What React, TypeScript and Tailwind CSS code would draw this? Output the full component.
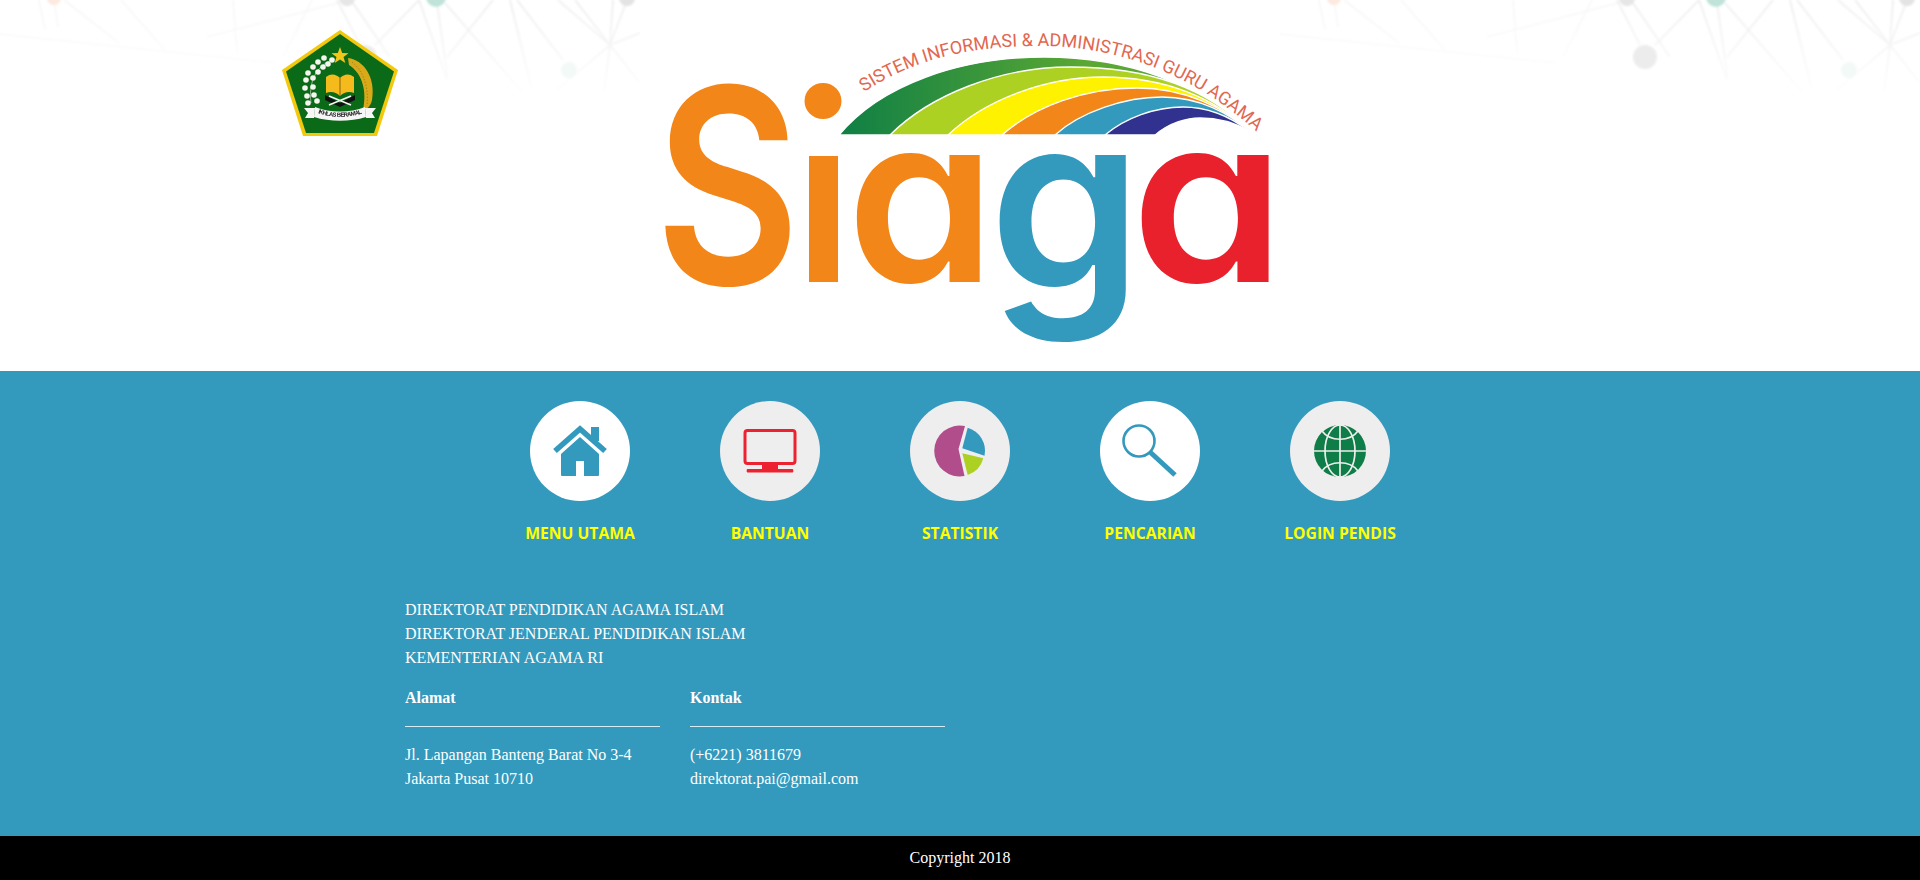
import React from "react";

const patternLines = [
  [419, 0, 375, 45], [337, 0, 360, 45], [419, 0, 447, 80], [437, 3, 448, 80], [445, 3, 523, 93],
  [510, 0, 532, 90], [517, 0, 563, 60], [558, 0, 610, 45], [575, 0, 610, 45], [613, 0, 610, 45],
  [627, 0, 610, 45], [610, 45, 640, 33], [610, 45, 640, 83], [610, 45, 553, 93], [610, 45, 603, 100],
  [493, 0, 447, 57], [353, 3, 390, 57],
];

const faintLines = [
  [54, 0, 58, 27], [39, 0, 45, 30], [64, 0, 119, 43], [121, 0, 165, 50], [233, 0, 237, 53],
  [312, 0, 283, 57], [338, 3, 207, 37], [-20, 32, 275, 63],
];

function NetworkPattern() {
  return (
    <svg viewBox="0 0 640 110" className="absolute left-0 top-0 h-[110px] w-[640px]">
      <defs>
        <linearGradient id="fadeLine" gradientUnits="userSpaceOnUse" x1="0" y1="0" x2="0" y2="100">
          <stop offset="0" stopColor="#ebebeb" />
          <stop offset="1" stopColor="#ffffff" />
        </linearGradient>
        <filter id="soften">
          <feGaussianBlur stdDeviation="0.8" />
        </filter>
      </defs>
      <g filter="url(#soften)">
        {patternLines.map((l, i) => (
          <line key={i} x1={l[0]} y1={l[1]} x2={l[2]} y2={l[3]} stroke="url(#fadeLine)" strokeWidth="1.6" />
        ))}
        <g opacity="0.45">
          {faintLines.map((l, i) => (
            <line key={i} x1={l[0]} y1={l[1]} x2={l[2]} y2={l[3]} stroke="url(#fadeLine)" strokeWidth="1.6" />
          ))}
        </g>
        <circle cx="365" cy="57" r="12" fill="#ececec" />
        <circle cx="436" cy="-3" r="10" fill="#bfe3d8" />
        <circle cx="347" cy="-2" r="8" fill="#e6e6e6" />
        <circle cx="627" cy="-2" r="8" fill="#e3e3e3" />
        <circle cx="569" cy="70" r="8" fill="#f3f9f7" />
        <circle cx="54" cy="-2" r="7" fill="#fde9e0" />
      </g>
    </svg>
  );
}

const jasmine = [
  [50, 30], [42, 28], [36, 32], [31, 37], [26, 43], [24, 50], [23, 58], [25, 66], [26, 73],
  [46, 34], [41, 37], [36, 42], [31, 48], [31, 57], [32, 65], [35, 71],
];

function Emblem() {
  return (
    <svg viewBox="0 0 116 106" className="h-[106px] w-[116px]">
      <defs>
        <path id="ribbonText" d="M36 83 C48 88 68 88 81 83" />
      </defs>
      <polygon points="58,0 116,40 95,106 21,106 0,40" fill="#f2c90c" />
      <polygon points="58,4 112,41.5 92,103 24,103 4,41.5" fill="#0b6a18" />
      <polygon
        points="58,17 60.2,23 66.5,23.3 61.5,27 63.3,33 58,29.6 52.7,33 54.5,27 49.5,23.3 55.8,23"
        fill="#f4c61a"
      />
      <path d="M48 31 C36 36 26 50 29 73" stroke="#8fb08a" strokeWidth="1" fill="none" />
      {jasmine.map((p, i) => (
        <circle key={i} cx={p[0]} cy={p[1]} r="2.8" fill="#f5f5ef" />
      ))}
      <path d="M66 28 C82 30 94 48 90 70 C89 75 86 79 81 80 C85 62 81 44 67 35 Z" fill="#d9a91a" />
      <path d="M70 32 C80 40 87 54 85 76" stroke="#8c7a12" strokeWidth="0.7" strokeDasharray="1.5 1.5" fill="none" />
      <path d="M43 65 L58 73 L73 65 L73 70 L58 77 L43 70 Z" fill="#111111" />
      <path d="M47 75 L69 66 M69 75 L47 66" stroke="#f5f5f5" strokeWidth="1.6" />
      <path d="M44 47 C49 43 54 44 58 48 C62 44 67 43 72 47 L72 63 C67 61 62 62 58 66 C54 62 49 61 44 63 Z" fill="#f5bb1d" />
      <path d="M58 48 V66" stroke="#8a6410" strokeWidth="1" />
      <path d="M33 77 C48 83 68 83 83 77 L84 87 C68 92 48 92 32 87 Z" fill="#f6f6f6" />
      <path d="M33 78 L22 78 L26 83 L23 88 L32 88 Z M83 78 L94 78 L90 83 L93 88 L84 88 Z" fill="#f6f6f6" />
      <text className="fill-[#222222] font-['Liberation_Sans',sans-serif] text-[6px] font-bold">
        <textPath href="#ribbonText" textLength="45" lengthAdjust="spacing">
          IKHLAS BERAMAL
        </textPath>
      </text>
    </svg>
  );
}

const bands = [
  { d: "M199 95 C240 45 320 17 404 17 C490 17 560 45 609 91 L609 95 Z", fill: "url(#greenBand)" },
  { d: "M250 95 C290 55 360 27 430 27 C510 27 570 50 609 91 L609 95 Z", fill: "#add122" },
  { d: "M308 95 C345 60 405 37 463 37 C525 37 575 58 609 91 L609 95 Z", fill: "#fff200" },
  { d: "M362 95 C395 66 445 48 497 48 C545 48 585 68 609 91 L609 95 Z", fill: "#f28619" },
  { d: "M415 95 C440 72 485 57 522 57 C560 57 590 74 609 91 L609 95 Z", fill: "#3399bd" },
  { d: "M465 95 C485 78 515 67 543 67 C570 67 592 78 609 91 L609 95 Z", fill: "#31318f" },
  { d: "M514 96 C530 82 548 78 560 78 C580 78 597 84 609 91 L609 96 Z", fill: "#ffffff" },
];

function SiagaLogo() {
  return (
    <svg viewBox="0 0 640 371" className="h-[371px] w-[640px]">
      <defs>
        <linearGradient id="greenBand" x1="0" y1="0" x2="1" y2="0">
          <stop offset="0" stopColor="#0f7f45" />
          <stop offset="0.6" stopColor="#5aa733" />
        </linearGradient>
        <path id="arcText" d="M224 92 C280 55 340 46 400 46 C480 46 565 76 635 150" />
      </defs>
      <rect width="640" height="371" fill="#ffffff" />
      <g transform="translate(0 40)">
        {bands.map((b, i) => (
          <path key={i} d={b.d} fill={b.fill} stroke="#ffffff" strokeWidth="1.4" />
        ))}
      </g>
      <text className="fill-[#e2674f] font-['Roboto',sans-serif] text-[18px] font-normal">
        <textPath href="#arcText" textLength="423" lengthAdjust="spacing">
          SISTEM INFORMASI &amp; ADMINISTRASI GURU AGAMA
        </textPath>
      </text>
      <g className="font-['Inter',sans-serif] font-semibold [font-feature-settings:'cv11']">
        <text transform="translate(15 284) scale(0.82 1)" className="fill-[#f28619] text-[272px]">S</text>
        <ellipse cx="183" cy="101" rx="18.5" ry="18" fill="#f28619" />
        <rect x="169" y="156" width="29" height="126" fill="#f28619" />
        <text transform="translate(206.5 282) scale(1.026 1)" className="fill-[#f28619] text-[233px]">a</text>
        <text transform="translate(349 289) scale(1 1)" className="fill-[#3399bd] text-[245px]">g</text>
        <text transform="translate(491 282) scale(1.06 1)" className="fill-[#e9212d] text-[233px]">a</text>
      </g>
    </svg>
  );
}

function HouseIcon() {
  return (
    <svg viewBox="0 0 100 100" className="h-[100px] w-[100px]">
      <rect x="61" y="26" width="8" height="14" fill="#3399bd" />
      <path d="M25 50 L50 28 L75 50" stroke="#3399bd" strokeWidth="5.5" fill="none" />
      <path d="M31 53 L50 36 L69 53 V74 Q69 75 68 75 H54 V60 H46 V75 H32 Q31 75 31 74 Z" fill="#3399bd" />
    </svg>
  );
}

function MonitorIcon() {
  return (
    <svg viewBox="0 0 100 100" className="h-[100px] w-[100px]">
      <rect x="25" y="29.5" width="50" height="33" rx="2.5" stroke="#ec2230" strokeWidth="3" fill="none" />
      <rect x="42" y="63" width="16" height="6" fill="#ec2230" />
      <rect x="26.7" y="68" width="46.6" height="3.6" rx="1" fill="#ec2230" />
    </svg>
  );
}

function PieIcon() {
  return (
    <svg viewBox="0 0 100 100" className="h-[100px] w-[100px]">
      <path d="M55 25 A25.5 25.5 0 1 0 54.5 75 L48.5 48 Z" fill="#b14d8b" />
      <path d="M52.3 47.3 L57.7 26.7 A24 24 0 0 1 74.5 54.7 Z" fill="#3399bd" />
      <path d="M52.3 52.3 L73.3 57.3 A24 24 0 0 1 57.7 74 Z" fill="#add122" />
    </svg>
  );
}

function SearchIcon() {
  return (
    <svg viewBox="0 0 100 100" className="h-[100px] w-[100px]">
      <circle cx="39" cy="40" r="15.5" stroke="#3399bd" strokeWidth="2.6" fill="none" />
      <path d="M50 51 L75 74" stroke="#3399bd" strokeWidth="5" />
    </svg>
  );
}

function GlobeIcon() {
  return (
    <svg viewBox="0 0 100 100" className="h-[100px] w-[100px]">
      <circle cx="50" cy="50" r="26" fill="#0e7d48" />
      <g stroke="#eeeeee" strokeWidth="1.7" fill="none">
        <ellipse cx="50" cy="50" rx="15" ry="26" />
        <path d="M24 50 H76 M50 24 V76" />
        <path d="M32 30 C40 41 60 41 68 30" />
        <path d="M32 70 C40 59 60 59 68 70" />
      </g>
    </svg>
  );
}

const menus = [
  { label: "MENU UTAMA", icon: <HouseIcon />, bg: "bg-white" },
  { label: "BANTUAN", icon: <MonitorIcon />, bg: "bg-[#eeeeee]" },
  { label: "STATISTIK", icon: <PieIcon />, bg: "bg-[#eeeeee]" },
  { label: "PENCARIAN", icon: <SearchIcon />, bg: "bg-white" },
  { label: "LOGIN PENDIS", icon: <GlobeIcon />, bg: "bg-[#eeeeee]" },
];

export default function App() {
  return (
    <div className="h-[880px] w-[1920px] overflow-hidden bg-white font-['Liberation_Serif',serif] text-white">
      <header className="flex h-[371px]">
        <div className="relative w-[640px] overflow-hidden pl-[282px] pt-[30px]">
          <NetworkPattern />
          <div className="relative">
            <Emblem />
          </div>
        </div>
        <SiagaLogo />
        <div className="relative w-[640px] overflow-hidden">
          <NetworkPattern />
        </div>
      </header>

      <main className="h-[465px] bg-[#3399bd] pt-[30px]">
        <nav className="flex justify-center">
          {menus.map((m) => (
            <div key={m.label} className="flex w-[190px] flex-col items-center">
              <div className={`h-[100px] w-[100px] rounded-full ${m.bg}`}>{m.icon}</div>
              <div className="mt-[20px] font-['Open_Sans',sans-serif] text-[15.7px] font-bold leading-6 text-[#ffff00]">
                {m.label}
              </div>
            </div>
          ))}
        </nav>

        <section className="ml-[405px] mt-[53px] text-base leading-6">
          <p>DIREKTORAT PENDIDIKAN AGAMA ISLAM</p>
          <p>DIREKTORAT JENDERAL PENDIDIKAN ISLAM</p>
          <p>KEMENTERIAN AGAMA RI</p>
          <div className="mt-[16px] flex gap-[30px]">
            <div className="w-[255px]">
              <div className="font-bold">Alamat</div>
              <hr className="mb-[16px] mt-[16px] border-t border-white/80" />
              <p>Jl. Lapangan Banteng Barat No 3-4</p>
              <p>Jakarta Pusat 10710</p>
            </div>
            <div className="w-[255px]">
              <div className="font-bold">Kontak</div>
              <hr className="mb-[16px] mt-[16px] border-t border-white/80" />
              <p>(+6221) 3811679</p>
              <p>direktorat.pai@gmail.com</p>
            </div>
          </div>
        </section>
      </main>

      <footer className="flex h-[44px] items-center justify-center bg-black text-base">Copyright 2018</footer>
    </div>
  );
}
